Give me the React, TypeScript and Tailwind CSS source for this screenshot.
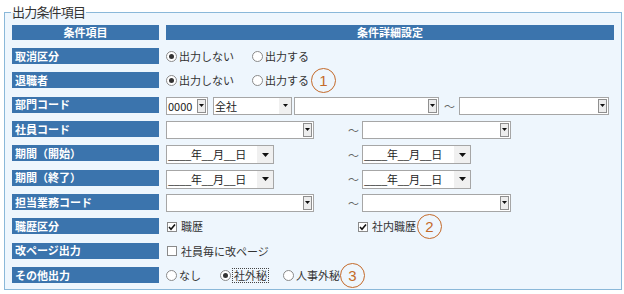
import type { ReactNode } from 'react'

function Radio({ checked = false }: { checked?: boolean }) {
  return (
    <span className="flex h-[11px] w-[11px] shrink-0 items-center justify-center rounded-full border border-[#8a8a8a] bg-white">
      {checked && <span className="h-[5px] w-[5px] rounded-full bg-[#333]" />}
    </span>
  )
}

function Check({ checked = false }: { checked?: boolean }) {
  return (
    <span className="flex h-[10px] w-[10px] shrink-0 items-center justify-center border border-[#8a8a8a] bg-white">
      {checked && (
        <svg width="8" height="8" viewBox="0 0 8 8">
          <path d="M1 4 L3 6.2 L7 1.5" fill="none" stroke="#111" strokeWidth="1.6" />
        </svg>
      )}
    </span>
  )
}

function Marker({ n }: { n: string }) {
  return (
    <span className="-my-[5px] flex h-[25px] w-[25px] shrink-0 items-center justify-center rounded-full border-[1.5px] border-[#c46a2a] font-['Liberation_Sans',sans-serif] text-[15px] leading-none text-[#c46a2a]">
      {n}
    </span>
  )
}

function SmallTri() {
  return (
    <svg width="5" height="3" viewBox="0 0 5 3">
      <path d="M0 0 H5 L2.5 3 Z" fill="#111" />
    </svg>
  )
}

// ドロップダウン（ボタン付き）
function Select({ className, text, flat = false }: { className: string; text?: string; flat?: boolean }) {
  return (
    <div className={`flex h-[18px] shrink-0 items-stretch border border-[#a6a6a6] bg-white ${className}`}>
      <span className="flex-1 overflow-hidden whitespace-nowrap pl-[1px] text-[11px] leading-[16px] text-[#222]">{text}</span>
      {flat ? (
        <span className="flex w-[12px] items-center justify-center bg-[#f0f0f0]">
          <SmallTri />
        </span>
      ) : (
        <span className="my-[1px] mr-[1px] flex w-[9px] items-center justify-center border border-[#8f8f8f] bg-[#ededed]">
          <SmallTri />
        </span>
      )}
    </div>
  )
}

function DateBox({ className }: { className: string }) {
  return (
    <div className={`flex h-[19px] shrink-0 items-stretch border border-[#a6a6a6] bg-white ${className}`}>
      <span className="flex-1 whitespace-nowrap pl-[1px] text-[11px] leading-[17px] tracking-[-0.4px] text-[#222]">
        ____年__月__日
      </span>
      <span className="flex w-[16px] items-center justify-center bg-[#f0f0f0]">
        <svg width="7" height="4" viewBox="0 0 7 4">
          <path d="M0 0 H7 L3.5 4 Z" fill="#111" />
        </svg>
      </span>
    </div>
  )
}

function Tilde({ className = '' }: { className?: string }) {
  return <span className={`text-[11px] leading-[16px] text-[#666] ${className}`}>〜</span>
}

function Row({ label, children }: { label: string; children: ReactNode }) {
  return (
    <div className="flex h-[24.33px] items-start gap-[7px]">
      <div className="flex h-[16px] w-[147px] shrink-0 items-center bg-[#3b74ad] pl-[3px] text-[11px] font-bold text-white">
        {label}
      </div>
      <div className="flex min-h-[16px] flex-1 items-center text-[11px] text-[#333]">{children}</div>
    </div>
  )
}

export default function App() {
  return (
    <div className="h-[294px] w-[624px] bg-white pl-[4px] pt-[3px] font-['Noto_Sans_CJK_JP',sans-serif]">
      <fieldset className="h-[287px] w-[618px] border border-[#8ab8d9] bg-[#eef6fd] px-[7px] pt-[4px]">
        <legend className="-ml-[1px] px-[1px] text-[13px] leading-[18px] tracking-[-0.8px] text-[#333]">出力条件項目</legend>

        {/* 見出し */}
        <div className="mb-[8px] flex h-[15px] gap-[7px] text-[11px] font-bold text-white">
          <div className="flex w-[147px] items-center justify-center bg-[#3b74ad]">条件項目</div>
          <div className="flex flex-1 items-center justify-center bg-[#3b74ad]">条件詳細設定</div>
        </div>

        <Row label="取消区分">
          <Radio checked />
          <span className="ml-[2px]">出力しない</span>
          <span className="ml-[18px]"><Radio /></span>
          <span className="ml-[2px]">出力する</span>
        </Row>
        <Row label="退職者">
          <Radio checked />
          <span className="ml-[2px]">出力しない</span>
          <span className="ml-[18px]"><Radio /></span>
          <span className="ml-[2px] mr-[2px]">出力する</span>
          <Marker n="1" />
        </Row>
        <Row label="部門コード">
          <Select className="w-[42px]" text="0000" />
          <Select className="ml-[5px] w-[79px]" text="全社" flat />
          <Select className="ml-[2px] w-[145px]" />
          <Tilde className="ml-[5px]" />
          <Select className="ml-[4px] w-[150px]" />
        </Row>
        <Row label="社員コード">
          <Select className="w-[148px]" />
          <Tilde className="ml-[34px]" />
          <Select className="ml-[3px] w-[149px]" />
        </Row>
        <Row label="期間（開始）">
          <DateBox className="w-[108px]" />
          <Tilde className="ml-[74px]" />
          <DateBox className="ml-[3px] w-[109px]" />
        </Row>
        <Row label="期間（終了）">
          <DateBox className="w-[108px]" />
          <Tilde className="ml-[74px]" />
          <DateBox className="ml-[3px] w-[109px]" />
        </Row>
        <Row label="担当業務コード">
          <Select className="w-[148px]" />
          <Tilde className="ml-[34px]" />
          <Select className="ml-[3px] w-[149px]" />
        </Row>
        <Row label="職歴区分">
          <span className="ml-[1px]"><Check checked /></span>
          <span className="ml-[4px]">職歴</span>
          <span className="ml-[155px]"><Check checked /></span>
          <span className="ml-[4px] mr-[1px]">社内職歴</span>
          <Marker n="2" />
        </Row>
        <Row label="改ページ出力">
          <span className="ml-[1px]"><Check /></span>
          <span className="ml-[4px]">社員毎に改ページ</span>
        </Row>
        <Row label="その他出力">
          <Radio />
          <span className="ml-[2px]">なし</span>
          <span className="ml-[19px]"><Radio checked /></span>
          <span className="ml-[1px] border border-dotted border-[#444] px-[1px] leading-[13px]">社外秘</span>
          <span className="ml-[14px]"><Radio /></span>
          <span className="ml-[2px]">人事外秘</span>
          <Marker n="3" />
        </Row>
      </fieldset>
    </div>
  )
}
